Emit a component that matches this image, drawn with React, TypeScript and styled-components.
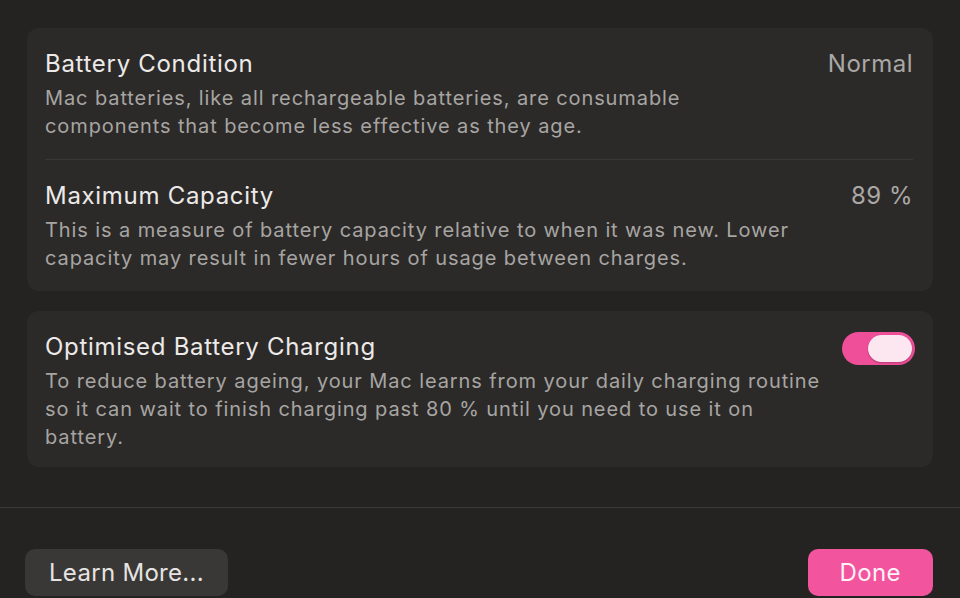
import React, { useState } from "react";
import styled, { createGlobalStyle } from "styled-components";

const GlobalStyle = createGlobalStyle`
  html, body {
    margin: 0;
    padding: 0;
    background: #252321;
    font-family: Inter, "Noto Sans", "Liberation Sans", sans-serif;
    -webkit-font-smoothing: antialiased;
  }
`;

const Page = styled.div`
  width: 960px;
  height: 598px;
  overflow: hidden;
  box-sizing: border-box;
  padding-top: 28px;
  background: #252321;
`;

const Cards = styled.div`
  display: flex;
  flex-direction: column;
  gap: 20px;
  padding: 0 27px;
`;

const Card = styled.section`
  background: #2c2a28;
  border-radius: 12px;
  padding: 0 20px 0 18px;
`;

const Row = styled.div<{ $bottom?: number }>`
  display: flex;
  justify-content: space-between;
  align-items: flex-start;
  gap: 20px;
  padding: 21px 0 ${(p) => p.$bottom ?? 19}px;

  & + & {
    border-top: 1px solid #3a3836;
  }
`;

const Text = styled.div`
  flex: 1;
  min-width: 0;
`;

const Title = styled.div`
  font-size: 24px;
  line-height: 30px;
  letter-spacing: 0.7px;
  color: #eceae8;
`;

const Desc = styled.p`
  margin: 5px 0 0;
  font-size: 20px;
  line-height: 28px;
  letter-spacing: 0.9px;
  white-space: nowrap;
  color: #a7a5a3;
`;

const Value = styled.div`
  font-size: 24px;
  line-height: 30px;
  letter-spacing: 0.5px;
  color: #aaa8a6;
  white-space: nowrap;
`;

const Switch = styled.button<{ $on: boolean }>`
  flex: none;
  width: 73px;
  height: 33px;
  margin-right: -2px;
  padding: 3px;
  border: none;
  border-radius: 17px;
  background: ${(p) => (p.$on ? "#ee4f98" : "#4a4846")};
  display: flex;
  justify-content: ${(p) => (p.$on ? "flex-end" : "flex-start")};
  cursor: pointer;
`;

const Knob = styled.span`
  width: 44px;
  height: 27px;
  border-radius: 14px;
  background: #fce6f0;
  box-shadow: 0 1px 2px rgba(0, 0, 0, 0.25);
`;

const Footer = styled.footer`
  margin-top: 40px;
  border-top: 1px solid #3b3937;
  padding: 41px 27px 0 25px;
  display: flex;
  justify-content: space-between;
`;

const Button = styled.button<{ $primary?: boolean }>`
  height: 47px;
  padding: 0 ${(p) => (p.$primary ? 32 : 24)}px;
  border: none;
  border-radius: 10px;
  font-family: inherit;
  font-size: 24px;
  letter-spacing: ${(p) => (p.$primary ? 0.4 : 0.3)}px;
  color: ${(p) => (p.$primary ? "#fdf2f7" : "#e6e4e2")};
  background: ${(p) => (p.$primary ? "#f2549d" : "#3a3836")};
  cursor: pointer;
`;

export default function App() {
  const [optimised, setOptimised] = useState(true);

  return (
    <Page>
      <GlobalStyle />
      <Cards>
        <Card>
          <Row>
            <Text>
              <Title>Battery Condition</Title>
              <Desc>
                Mac batteries, like all rechargeable batteries, are consumable
                <br />
                components that become less effective as they age.
              </Desc>
            </Text>
            <Value>Normal</Value>
          </Row>
          <Row>
            <Text>
              <Title>Maximum Capacity</Title>
              <Desc>
                This is a measure of battery capacity relative to when it was new. Lower
                <br />
                capacity may result in fewer hours of usage between charges.
              </Desc>
            </Text>
            <Value>89 %</Value>
          </Row>
        </Card>
        <Card>
          <Row $bottom={16}>
            <Text>
              <Title>Optimised Battery Charging</Title>
              <Desc>
                To reduce battery ageing, your Mac learns from your daily charging routine
                <br />
                so it can wait to finish charging past 80 % until you need to use it on
                <br />
                battery.
              </Desc>
            </Text>
            <Switch
              type="button"
              $on={optimised}
              aria-pressed={optimised}
              onClick={() => setOptimised(!optimised)}
            >
              <Knob />
            </Switch>
          </Row>
        </Card>
      </Cards>
      <Footer>
        <Button type="button">Learn More...</Button>
        <Button type="button" $primary>
          Done
        </Button>
      </Footer>
    </Page>
  );
}
